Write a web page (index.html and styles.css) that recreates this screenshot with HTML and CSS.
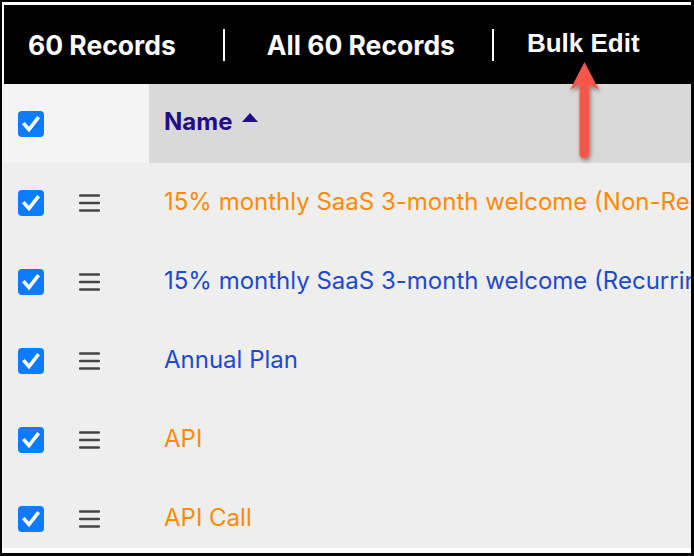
FILE: index.html
```html
<!DOCTYPE html>
<html>
<head>
<meta charset="utf-8">
<link rel="stylesheet" href="styles.css">
</head>
<body>
<div class="frame">
  <div class="topbar">
    <span class="tb-text tb-count">60 Records</span>
    <span class="tb-sep sep1"></span>
    <span class="tb-text tb-all">All 60 Records</span>
    <span class="tb-sep sep2"></span>
    <span class="tb-bulk">Bulk Edit</span>
  </div>
  <div class="table">
    <div class="row head">
      <div class="cell-left">
        <span class="cb"><svg width="26" height="26" viewBox="0 0 26 26"><rect width="26" height="26" rx="4" fill="#0b7bff"/><path d="M6.5 13.5 L11 18.5 L19.5 7.5" fill="none" stroke="#fff" stroke-width="3.6" stroke-linecap="square" stroke-linejoin="miter"/></svg></span>
      </div>
      <div class="cell-name head-name">Name <span class="caret"></span></div>
    </div>
    <div class="body">
      <div class="row">
        <div class="cell-left">
          <span class="cb"><svg width="26" height="26" viewBox="0 0 26 26"><rect width="26" height="26" rx="4" fill="#0b7bff"/><path d="M6.5 13.5 L11 18.5 L19.5 7.5" fill="none" stroke="#fff" stroke-width="3.6" stroke-linecap="square"/></svg></span>
          <span class="ham"><svg width="21" height="18" viewBox="0 0 21 18"><path d="M1 1.5H20M1 9H20M1 16.5H20" stroke="#444" stroke-width="2.5" stroke-linecap="round"/></svg></span>
        </div>
        <div class="cell-name orange">15% monthly SaaS 3-month welcome (Non-Recurring)</div>
      </div>
      <div class="row">
        <div class="cell-left">
          <span class="cb"><svg width="26" height="26" viewBox="0 0 26 26"><rect width="26" height="26" rx="4" fill="#0b7bff"/><path d="M6.5 13.5 L11 18.5 L19.5 7.5" fill="none" stroke="#fff" stroke-width="3.6" stroke-linecap="square"/></svg></span>
          <span class="ham"><svg width="21" height="18" viewBox="0 0 21 18"><path d="M1 1.5H20M1 9H20M1 16.5H20" stroke="#444" stroke-width="2.5" stroke-linecap="round"/></svg></span>
        </div>
        <div class="cell-name blue">15% monthly SaaS 3-month welcome (Recurring)</div>
      </div>
      <div class="row">
        <div class="cell-left">
          <span class="cb"><svg width="26" height="26" viewBox="0 0 26 26"><rect width="26" height="26" rx="4" fill="#0b7bff"/><path d="M6.5 13.5 L11 18.5 L19.5 7.5" fill="none" stroke="#fff" stroke-width="3.6" stroke-linecap="square"/></svg></span>
          <span class="ham"><svg width="21" height="18" viewBox="0 0 21 18"><path d="M1 1.5H20M1 9H20M1 16.5H20" stroke="#444" stroke-width="2.5" stroke-linecap="round"/></svg></span>
        </div>
        <div class="cell-name blue">Annual Plan</div>
      </div>
      <div class="row">
        <div class="cell-left">
          <span class="cb"><svg width="26" height="26" viewBox="0 0 26 26"><rect width="26" height="26" rx="4" fill="#0b7bff"/><path d="M6.5 13.5 L11 18.5 L19.5 7.5" fill="none" stroke="#fff" stroke-width="3.6" stroke-linecap="square"/></svg></span>
          <span class="ham"><svg width="21" height="18" viewBox="0 0 21 18"><path d="M1 1.5H20M1 9H20M1 16.5H20" stroke="#444" stroke-width="2.5" stroke-linecap="round"/></svg></span>
        </div>
        <div class="cell-name orange">API</div>
      </div>
      <div class="row">
        <div class="cell-left">
          <span class="cb"><svg width="26" height="26" viewBox="0 0 26 26"><rect width="26" height="26" rx="4" fill="#0b7bff"/><path d="M6.5 13.5 L11 18.5 L19.5 7.5" fill="none" stroke="#fff" stroke-width="3.6" stroke-linecap="square"/></svg></span>
          <span class="ham"><svg width="21" height="18" viewBox="0 0 21 18"><path d="M1 1.5H20M1 9H20M1 16.5H20" stroke="#444" stroke-width="2.5" stroke-linecap="round"/></svg></span>
        </div>
        <div class="cell-name orange">API Call</div>
      </div>
    </div>
  </div>
  <svg class="arrow" width="60" height="120" viewBox="550 55 60 120">
    <defs>
      <filter id="sh" x="-50%" y="-20%" width="200%" height="140%">
        <feDropShadow dx="1" dy="2" stdDeviation="2" flood-color="#000" flood-opacity="0.45"/>
      </filter>
    </defs>
    <path filter="url(#sh)" fill="#f9564c" d="M584.5 64 L599 92 L589.5 86.5 L589.5 155.5 A5 5 0 0 1 579.5 155.5 L579.5 86.5 L570 92 Z"/>
  </svg>
</div>
</body>
</html>
```
FILE: styles.css
```css
html, body {
  margin: 0;
  padding: 0;
  background: #fff;
}
.frame {
  position: relative;
  width: 694px;
  height: 556px;
  box-sizing: border-box;
  border-style: solid;
  border-color: #000;
  border-width: 2px 3px 3px 2px;
  padding-top: 3px;
  background: #fff;
  font-family: Inter, "Liberation Sans", sans-serif;
}
.topbar {
  height: 79px;
  margin-left: 2px;
  margin-right: -3px;
  background: #000;
  color: #fff;
  display: flex;
  align-items: center;
  padding-left: 24px;
}
.tb-text {
  font-family: Inter, sans-serif;
  font-weight: 700;
  font-size: 26.5px;
  white-space: nowrap;
}
.tb-sep {
  width: 2px;
  height: 32px;
  background: #fff;
  flex: none;
}
.sep1 { margin-left: 47px; }
.tb-all { margin-left: 42px; }
.sep2 { margin-left: 37px; }
.tb-bulk {
  margin-left: 33px;
  margin-top: -3px;
  font-family: "Liberation Sans", Arial, sans-serif;
  font-weight: 700;
  font-size: 26px;
  white-space: nowrap;
}
.table {
  display: flex;
  flex-direction: column;
}
.body {
  height: 385px;
  overflow: hidden;
}
.row {
  height: 79px;
  display: flex;
  align-items: stretch;
  background: #eeeeee;
}
.cell-left {
  width: 147px;
  box-sizing: border-box;
  padding-left: 16px;
  display: flex;
  align-items: center;
  flex: none;
}
.head .cell-left { background: #f4f4f4; }
.cb {
  display: block;
  width: 26px;
  height: 26px;
}
.cb svg { display: block; }
.ham {
  display: block;
  margin-left: 35px;
  width: 21px;
  height: 18px;
}
.ham svg { display: block; }
.cell-name {
  flex: 1;
  min-width: 0;
  padding-left: 15px;
  padding-bottom: 2px;
  display: flex;
  align-items: center;
  white-space: nowrap;
  overflow: hidden;
  font-size: 24px;
}
.head-name {
  background: #d9d9d9;
  color: #230c88;
  font-weight: 700;
  padding-bottom: 5px;
}
.caret {
  display: inline-block;
  width: 0;
  height: 0;
  margin-left: 10px;
  margin-top: -7px;
  border-left: 8px solid transparent;
  border-right: 8px solid transparent;
  border-bottom: 9px solid #230c88;
}
.orange { color: #ff8a05; }
.blue { color: #1e49cf; }
.arrow {
  position: absolute;
  left: 548px;
  top: 51px;
}
```
